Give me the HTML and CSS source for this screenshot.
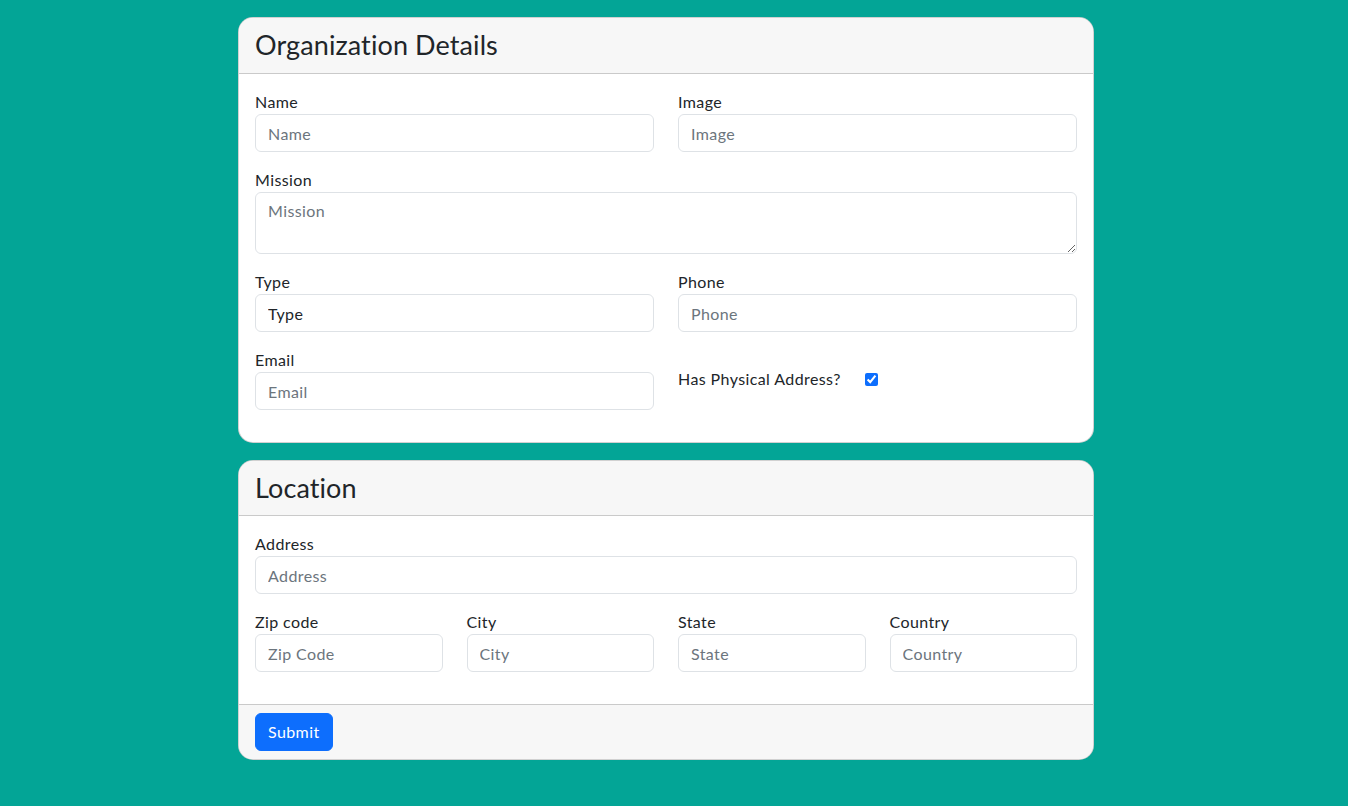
FILE: index.html
```html
<!DOCTYPE html>
<html lang="en">
<head>
<meta charset="utf-8">
<title>Organization Details</title>
<link rel="stylesheet" href="styles.css">
</head>
<body>
<div class="page">
  <form class="container">
    <section class="card">
      <header class="card-header"><h3 class="card-title">Organization Details</h3></header>
      <div class="card-body">
        <div class="row cols-2">
          <div class="field">
            <label class="label" for="name">Name</label>
            <input class="input" id="name" type="text" placeholder="Name">
          </div>
          <div class="field">
            <label class="label" for="image">Image</label>
            <input class="input" id="image" type="text" placeholder="Image">
          </div>
        </div>
        <div class="field">
          <label class="label" for="mission">Mission</label>
          <textarea class="input textarea" id="mission" placeholder="Mission"></textarea>
        </div>
        <div class="row cols-2">
          <div class="field">
            <label class="label" for="type">Type</label>
            <input class="input" id="type" type="text" value="Type">
          </div>
          <div class="field">
            <label class="label" for="phone">Phone</label>
            <input class="input" id="phone" type="text" placeholder="Phone">
          </div>
        </div>
        <div class="row cols-2">
          <div class="field">
            <label class="label" for="email">Email</label>
            <input class="input" id="email" type="email" placeholder="Email">
          </div>
          <div class="field check-field">
            <label class="label check-label" for="physical">Has Physical Address?</label>
            <input class="checkbox" id="physical" type="checkbox" checked>
          </div>
        </div>
      </div>
    </section>

    <section class="card card-second">
      <header class="card-header"><h3 class="card-title">Location</h3></header>
      <div class="card-body">
        <div class="field">
          <label class="label" for="address">Address</label>
          <input class="input" id="address" type="text" placeholder="Address">
        </div>
        <div class="row cols-4">
          <div class="field">
            <label class="label" for="zip">Zip code</label>
            <input class="input" id="zip" type="text" placeholder="Zip Code">
          </div>
          <div class="field">
            <label class="label" for="city">City</label>
            <input class="input" id="city" type="text" placeholder="City">
          </div>
          <div class="field">
            <label class="label" for="state">State</label>
            <input class="input" id="state" type="text" placeholder="State">
          </div>
          <div class="field">
            <label class="label" for="country">Country</label>
            <input class="input" id="country" type="text" placeholder="Country">
          </div>
        </div>
      </div>
      <footer class="card-footer">
        <button class="btn" type="submit">Submit</button>
      </footer>
    </section>
  </form>
</div>
</body>
</html>
```

FILE: styles.css
```css
* { box-sizing: border-box; }

html, body {
  margin: 0;
  padding: 0;
}

body {
  background: #03a596;
  font-family: Lato, "Noto Sans", sans-serif;
  font-size: 16px;
  line-height: 1.5;
  letter-spacing: 0.4px;
  color: #212529;
  min-height: 806px;
}

.page {
  width: 1332px;
  padding-top: 17px;
}

.container {
  width: 856px;
  margin: 0 auto;
}

.card {
  background: #fff;
  border: 1px solid rgba(0, 0, 0, 0.18);
  border-radius: 15px;
  overflow: hidden;
}

.card-second {
  margin-top: 17px;
}

.card-header {
  background: #f7f7f7;
  border-bottom: 1px solid rgba(0, 0, 0, 0.18);
  height: 56px;
  padding: 0 16px;
  display: flex;
  align-items: center;
}

.card-second .card-header {
  height: 55px;
}

.card-title {
  margin: 0;
  font-size: 27px;
  font-weight: 400;
  line-height: 1.2;
  letter-spacing: 0.1px;
  color: #212529;
}

.card-body {
  padding: 16px;
}

.row {
  display: grid;
  column-gap: 24px;
}

.cols-2 { grid-template-columns: 1fr 1fr; }
.cols-4 { grid-template-columns: 1fr 1fr 1fr 1fr; }

.field {
  margin-bottom: 16px;
  display: flex;
  flex-direction: column;
}

.label {
  display: block;
  font-size: 16px;
  line-height: 24px;
  color: #212529;
}

.input {
  display: block;
  width: 100%;
  height: 38px;
  padding: 6px 12px;
  font-family: inherit;
  font-size: 16px;
  line-height: 24px;
  letter-spacing: 0.4px;
  color: #212529;
  background: #fff;
  border: 1px solid #dee2e6;
  border-radius: 6px;
  outline: none;
}

.input::placeholder {
  color: #6c757d;
  opacity: 1;
}

.textarea {
  height: 62px;
  resize: vertical;
}

.check-field {
  flex-direction: row;
  align-items: center;
  align-self: start;
  padding-top: 19px;
}

.check-label {
  margin-right: 24px;
}

.checkbox {
  width: 13px;
  height: 13px;
  margin: 0;
  accent-color: #0d6efd;
}

.card-footer {
  background: #f7f7f7;
  border-top: 1px solid rgba(0, 0, 0, 0.18);
  padding: 8px 16px;
}

.btn {
  display: inline-block;
  font-family: inherit;
  font-size: 16px;
  line-height: 24px;
  letter-spacing: 0.4px;
  padding: 6px 12px;
  color: #fff;
  background: #0d6efd;
  border: 1px solid #0d6efd;
  border-radius: 6px;
  cursor: pointer;
}
```
